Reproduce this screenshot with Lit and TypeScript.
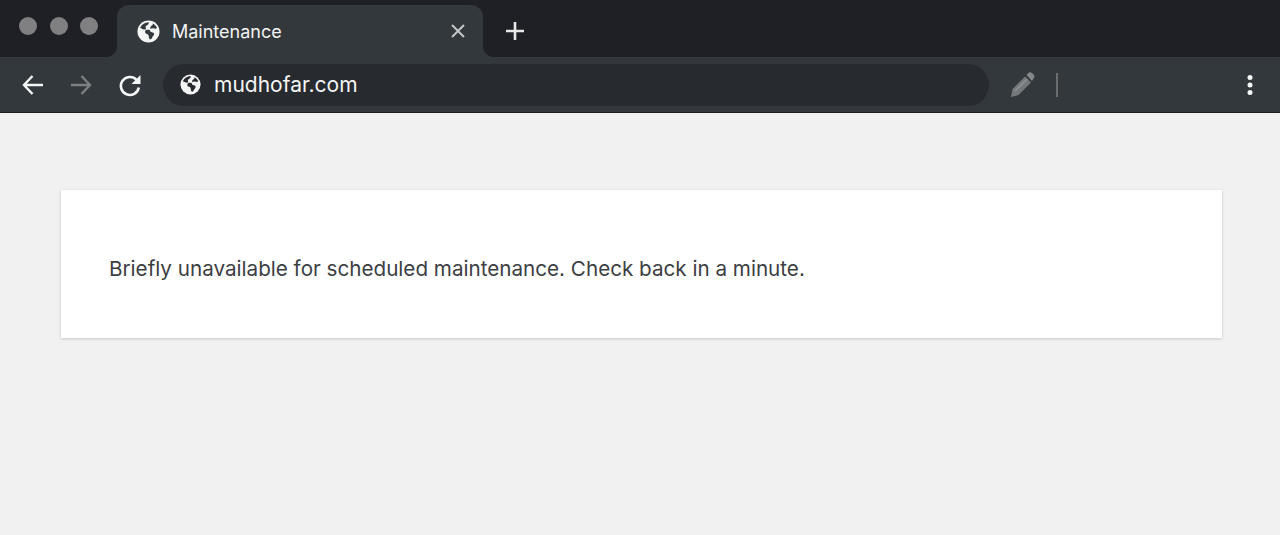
import { LitElement, html, css, svg } from "lit";
import { customElement } from "lit/decorators.js";

const globe = (size: number, cut: string) => html`<svg class="globe" width=${size} height=${size} viewBox="0 0 24 24">
  <circle cx="12" cy="12" r="11.500" fill="#f4f5f5"></circle>
  ${svg`<path fill=${cut} d="M3.200 8.200C5 4.600 8.200 2.600 12 2.400c.6 1 .2 1.900-.7 2.600-.9.6-2 .8-2.300 1.800-.2.8.5 1.400.3 2.200-.3 1-1.600 1-2.500.8-1-.3-2.200-.9-3.600-1.600zM15.800 3.300c2.400.9 4.200 2.700 5.100 5.100-.9.7-2 .8-3.100.5-1.300-.4-2.700-.2-3.700.6-.9.8-.8 2 .1 2.700.8.6 2 .5 2.900 1 1 .6.9 1.800.3 2.700-.6 1-1.500 1.800-1.800 3-.2.8-.9 1.300-1.700 1.300-.7 0-1.100-.6-1.300-1.300-.3-1-.2-2-.6-3-.4-.9-1.400-1.100-2.300-1.500-1.100-.5-1.600-1.700-1.200-2.800.4-1.200 1.700-1.700 2.900-1.500.9.100 1.700.5 2.400-.2.700-.8-.2-1.900.3-2.800.5-1 1.700-1.200 2.300-2.100.2-.5.1-1 0-1.500z"></path>`}
</svg>`;

@customElement("app-root")
export class AppRoot extends LitElement {
  static styles = css`
    :host {
      display: block;
      width: 1280px;
      height: 535px;
      overflow: hidden;
      background: #f1f1f1;
      font-family: Inter, "Liberation Sans", Arial, sans-serif;
    }
    .strip {
      height: 57px;
      box-sizing: border-box;
      padding: 5px 0 0 0;
      background: #1f2025;
      display: flex;
      align-items: stretch;
    }
    .lights {
      width: 117px;
      box-sizing: border-box;
      padding: 0 0 10px 19px;
      display: flex;
      align-items: center;
      gap: 12.500px;
    }
    .light {
      width: 18px;
      height: 18px;
      border-radius: 50%;
      background: #807f81;
    }
    .tab {
      position: relative;
      width: 366px;
      box-sizing: border-box;
      padding: 0 17px 0 20px;
      display: flex;
      align-items: center;
      gap: 12px;
      background: #33383c;
      border-radius: 12px 12px 0 0;
      color: #f2f3f3;
      font-size: 18px;
    }
    .tab::before,
    .tab::after {
      content: "";
      position: absolute;
      bottom: 0;
      width: 10px;
      height: 10px;
    }
    .tab::before {
      left: -10px;
      background: radial-gradient(circle at 0 0, transparent 9.500px, #33383c 10px);
    }
    .tab::after {
      right: -10px;
      background: radial-gradient(circle at 100% 0, transparent 9.500px, #33383c 10px);
    }
    .tab-title {
      flex: 1;
      padding-top: 1px;
    }
    .newtab {
      margin-left: 21px;
      display: flex;
      align-items: center;
    }
    .toolbar {
      height: 55px;
      box-sizing: border-box;
      background: #33383c;
      display: flex;
      align-items: center;
      padding: 0 27px 0 22px;
    }
    .divider {
      height: 1px;
      background: #1d1f21;
    }
    .nav {
      display: flex;
      align-items: center;
    }
    .nav svg {
      display: block;
    }
    .fwd {
      margin-left: 27px;
    }
    .reload {
      margin-left: 26px;
    }
    .omnibox {
      margin-left: 21px;
      width: 826px;
      height: 42px;
      box-sizing: border-box;
      border-radius: 21px;
      background: #272a2e;
      display: flex;
      align-items: center;
      gap: 13px;
      padding: 0 0 0 17px;
      color: #f4f5f5;
      font-size: 21px;
    }
    .globe {
      flex: none;
      display: block;
    }
    .ext {
      margin-left: 20px;
      display: block;
    }
    .sep {
      margin-left: 19px;
      width: 2px;
      height: 24px;
      background: #6a6e71;
    }
    .spacer {
      flex: 1;
    }
    .page {
      padding: 77px 58px 0 61px;
    }
    .card {
      height: 148px;
      box-sizing: border-box;
      background: #fff;
      padding: 8px 48px 0;
      display: flex;
      align-items: center;
      box-shadow: 0 1px 3px rgba(0, 0, 0, 0.18);
      color: #3c4043;
      font-size: 20.650px;
    }
  `;

  render() {
    return html`
      <div class="strip">
        <div class="lights">
          <span class="light"></span><span class="light"></span><span class="light"></span>
        </div>
        <div class="tab">
          ${globe(23, "#33383c")}
          <span class="tab-title">Maintenance</span>
          <svg width="16" height="16" viewBox="0 0 16 16">
            <path d="M2 2l12 12M14 2L2 14" stroke="#c3c5c6" stroke-width="2" fill="none"></path>
          </svg>
        </div>
        <div class="newtab">
          <svg width="22" height="22" viewBox="0 0 22 22">
            <path d="M11 2v18M2 11h18" stroke="#e8e8e8" stroke-width="2.600" fill="none"></path>
          </svg>
        </div>
      </div>
      <div class="toolbar">
        <div class="nav">
          <svg width="21" height="20" viewBox="0 0 21 20">
            <path d="M21 10H2M10.500 1L2 10l8.500 9" stroke="#f4f5f5" stroke-width="2.400" fill="none"></path>
          </svg>
          <svg class="fwd" width="22" height="20" viewBox="0 0 22 20">
            <path d="M1 10h19M11.500 1L20 10l-8.500 9" stroke="#7c8083" stroke-width="2.400" fill="none"></path>
          </svg>
          <svg class="reload" width="24" height="24" viewBox="0 0 24 24">
            <path d="M18.500 6.800A9 9 0 1 0 20.800 14.500" stroke="#f4f5f5" stroke-width="2.600" fill="none"></path>
            <path d="M22.500 2V11H13.500z" fill="#f4f5f5"></path>
          </svg>
        </div>
        <div class="omnibox">${globe(21, "#272a2e")}<span>mudhofar.com</span></div>
        <svg class="ext" width="28" height="28" viewBox="0 0 28 28">
          <path d="M2 26l1.500-8L16 5.500l6 6L9.500 24z" fill="#74787a"></path>
          <path d="M17.500 4l2.500-2.500c2-.8 5.500 2 5.500 4.500L23 10z" fill="#83878a"></path>
          <path d="M6 20L18 8" stroke="#8d9192" stroke-width="1.500"></path>
        </svg>
        <span class="sep"></span>
        <span class="spacer"></span>
        <svg width="6" height="22" viewBox="0 0 6 22">
          <circle cx="3" cy="3.500" r="2.500" fill="#f6f7f7"></circle>
          <circle cx="3" cy="11" r="2.500" fill="#f6f7f7"></circle>
          <circle cx="3" cy="18.500" r="2.500" fill="#f6f7f7"></circle>
        </svg>
      </div>
      <div class="divider"></div>
      <div class="page">
        <div class="card">Briefly unavailable for scheduled maintenance. Check back in a minute.</div>
      </div>
    `;
  }
}
